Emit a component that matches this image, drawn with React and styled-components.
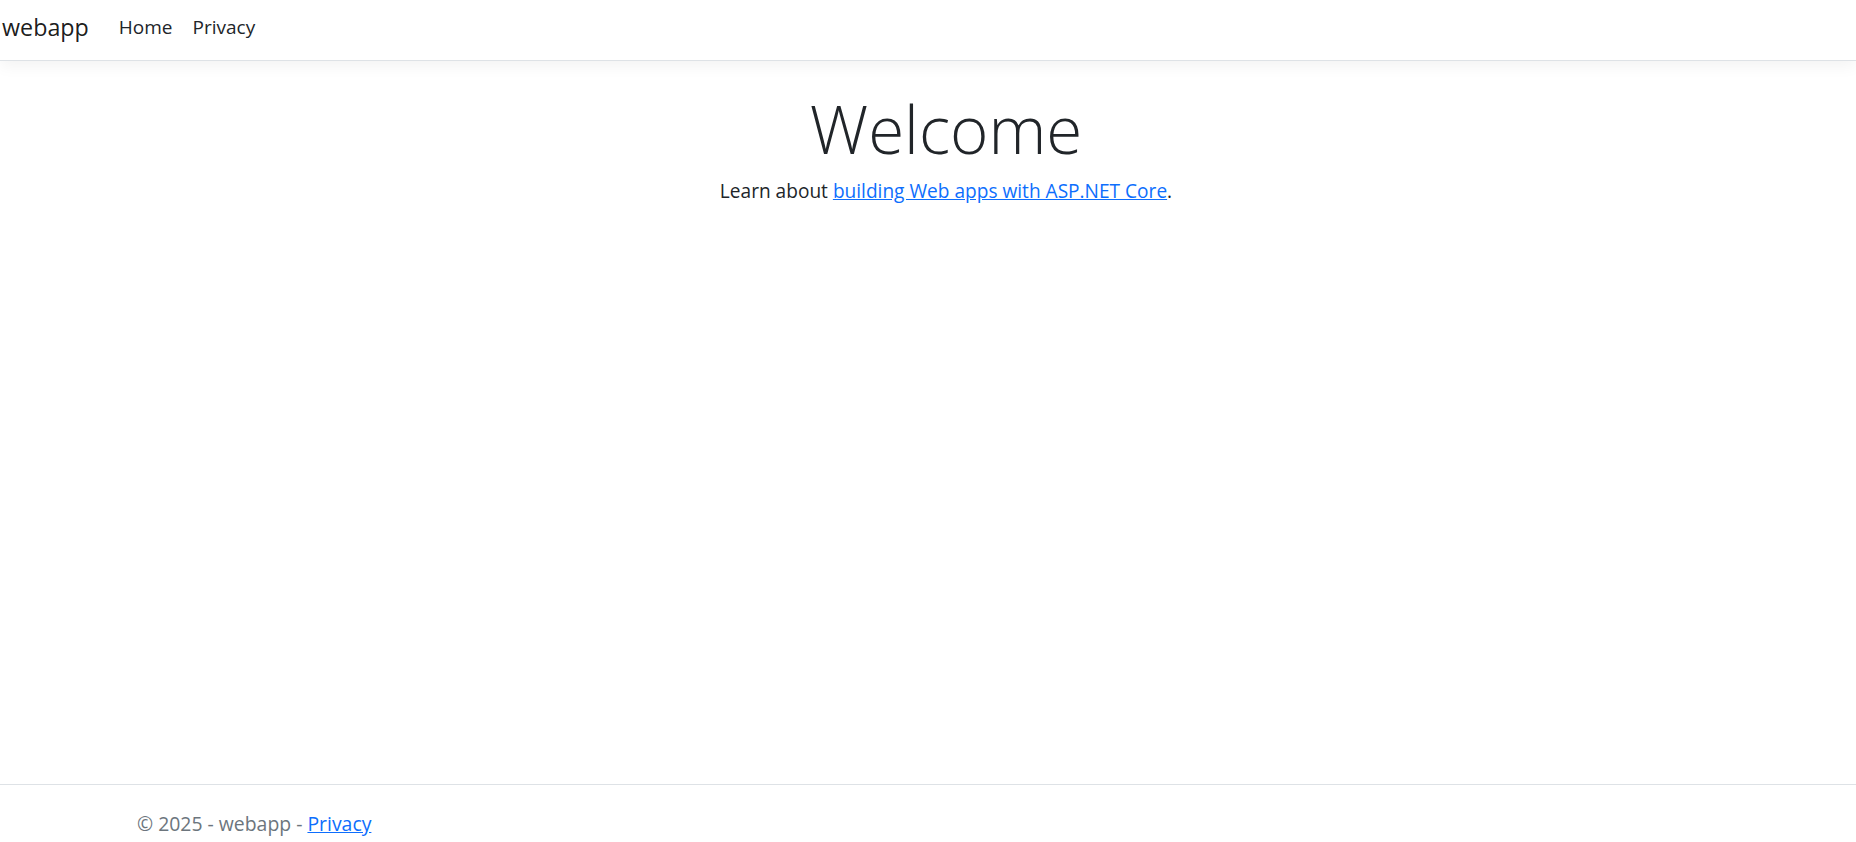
import React from "react";
import styled, { createGlobalStyle } from "styled-components";

const GlobalStyle = createGlobalStyle`
  html, body { margin: 0; padding: 0; }
  body {
    font-family: "Open Sans", "Noto Sans", sans-serif;
    color: #212529;
    background: #ffffff;
    -webkit-font-smoothing: antialiased;
  }
  * { box-sizing: border-box; }
`;

const Page = styled.div`
  min-height: 100vh;
  display: flex;
  flex-direction: column;
`;

const Navbar = styled.header`
  height: 61px;
  display: flex;
  align-items: center;
  padding: 0 0 6px 2px;
  border-bottom: 1px solid #dee2e6;
  box-shadow: 0 5px 15px rgba(0, 0, 0, 0.05);
  background: #fff;
`;

const Brand = styled.a`
  font-size: 23.3px;
  color: rgba(0, 0, 0, 0.9);
  text-decoration: none;
  margin-right: 20px;
  line-height: 1.5;
`;

const NavList = styled.nav`
  display: flex;
  align-items: center;
`;

const NavLink = styled.a`
  font-size: 19px;
  color: #212529;
  text-decoration: none;
  padding: 0 10px;
  line-height: 1.5;
`;

const Main = styled.main`
  flex: 1;
  display: flex;
  flex-direction: column;
  align-items: center;
  text-align: center;
  padding: 29px 0 0 36px;
`;

const Title = styled.h1`
  margin: 0 0 8px;
  font-size: 65.5px;
  font-weight: 300;
  line-height: 1.2;
  color: #212529;
`;

const Lead = styled.p`
  margin: 0;
  font-size: 19.1px;
  line-height: 1.5;
`;

const Link = styled.a`
  color: #0d6efd;
  text-decoration: underline;
`;

const Footer = styled.footer`
  height: 58px;
  border-top: 1px solid #dee2e6;
  color: #6c757d;
  font-size: 19.4px;
  line-height: 30px;
  padding: 24px 0 0 137px;
  white-space: nowrap;
`;

export default function App() {
  return (
    <>
      <GlobalStyle />
      <Page>
        <Navbar>
          <Brand href="#">webapp</Brand>
          <NavList>
            <NavLink href="#">Home</NavLink>
            <NavLink href="#">Privacy</NavLink>
          </NavList>
        </Navbar>
        <Main>
          <Title>Welcome</Title>
          <Lead>
            Learn about <Link href="#">building Web apps with ASP.NET Core</Link>.
          </Lead>
        </Main>
        <Footer>
          © 2025 - webapp - <Link href="#">Privacy</Link>
        </Footer>
      </Page>
    </>
  );
}
